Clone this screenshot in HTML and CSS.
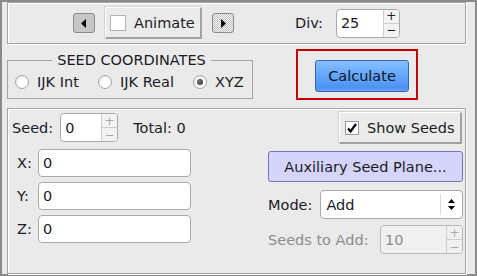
FILE: index.html
```html
<!doctype html>
<html>
  <head>
    <meta charset="utf-8">
    <title>Seed Controls</title>
    <link rel="stylesheet" href="styles.css">
  </head>
  <body>
    <div class="window">
      <div class="panel toolbar">
        <span class="arrowbtn">
          <svg width="6" height="9" viewBox="0 0 6 9"><polygon points="5,0 5,9 0,4.5" fill="#000"/></svg>
        </span>
        <span class="raised animate"><span class="checkbox"></span>Animate</span>
        <span class="arrowbtn hot">
          <svg width="6" height="9" viewBox="0 0 6 9"><polygon points="1,0 1,9 6,4.5" fill="#000"/></svg>
        </span>
        <span class="divlabel">Div:</span>
        <span class="spin divspin">
          <span class="val">25</span>
          <span class="steps"><span>+</span><span>&minus;</span></span>
        </span>
      </div>

      <div class="middle">
        <fieldset class="coords">
          <legend>SEED COORDINATES</legend>
          <div class="radios">
            <span class="opt opt1"><span class="radio"></span>IJK Int</span>
            <span class="opt opt2"><span class="radio"></span>IJK Real</span>
            <span class="opt"><span class="radio on"></span>XYZ</span>
          </div>
        </fieldset>
        <div class="calcbox">
          <span class="calc">Calculate</span>
        </div>
      </div>

      <div class="panel seeds">
        <div class="leftcol">
          <div class="seedrow">
            <span>Seed:</span>
            <span class="spin seedspin">
              <span class="val">0</span>
              <span class="steps faint"><span>+</span><span>&minus;</span></span>
            </span>
            <span class="total">Total: 0</span>
          </div>
          <div class="xyz first"><span class="axis">X:</span><span class="field">0</span></div>
          <div class="xyz"><span class="axis">Y:</span><span class="field">0</span></div>
          <div class="xyz"><span class="axis">Z:</span><span class="field">0</span></div>
        </div>
        <div class="rightcol">
          <span class="raised showseeds">
            <span class="checkbox small">
              <svg width="12" height="12" viewBox="0 0 12 12"><path d="M2 6.5 L4.5 9.5 L10 2" stroke="#000" stroke-width="2.2" fill="none"/></svg>
            </span>Show Seeds
          </span>
          <span class="aux">Auxiliary Seed Plane...</span>
          <div class="moderow">
            <span>Mode:</span>
            <span class="select">
              <span class="val">Add</span>
              <span class="updown">
                <svg width="7" height="11" viewBox="0 0 7 11"><polygon points="3.5,0 7,4 0,4" fill="#000"/><polygon points="0,7 7,7 3.5,11" fill="#000"/></svg>
              </span>
            </span>
          </div>
          <div class="addrow">
            <span class="dim">Seeds to Add:</span>
            <span class="spin addspin">
              <span class="val">10</span>
              <span class="steps faint"><span>+</span><span>&minus;</span></span>
            </span>
          </div>
        </div>
      </div>
    </div>
  </body>
</html>
```

FILE: styles.css
```css
body {
  margin: 0;
  font-family: 'DejaVu Sans', Verdana, sans-serif;
  font-size: 14.5px;
  color: #1b1b26;
}
.window {
  width: 477px;
  height: 276px;
  box-sizing: border-box;
  border: 2px solid #8a8a8a;
  background: #eaeaea;
  padding: 0 9px 0 5px;
  display: flex;
  flex-direction: column;
}
.panel {
  box-sizing: border-box;
  border: 1px solid #a4a4a4;
  box-shadow: inset 1px 1px 0 #fff, 1px 1px 0 #fff;
}

/* top toolbar */
.toolbar {
  height: 42px;
  display: flex;
  align-items: center;
  padding-left: 65px;
}
.arrowbtn {
  width: 22px;
  height: 20px;
  box-sizing: border-box;
  border: 1px solid #8c8c8c;
  border-radius: 3px;
  background: #c6c6c6;
  display: flex;
  align-items: center;
  justify-content: center;
}
.arrowbtn.hot {
  background: repeating-conic-gradient(#c4c4c4 0 25%, #f4f4f4 0 50%) 0 0 / 2px 2px;
}
.raised {
  box-sizing: border-box;
  display: flex;
  align-items: center;
  background: #ebebeb;
  border-style: solid;
  border-width: 1px 2px 2px 1px;
  border-color: #fff #a2a2a2 #a2a2a2 #fff;
  box-shadow: -1px -1px 0 #d2d2d2;
}
.animate {
  width: 97px;
  height: 32px;
  margin-left: 10px;
  margin-right: 10px;
  padding-left: 4px;
}
.checkbox {
  width: 16px;
  height: 16px;
  box-sizing: border-box;
  border: 1px solid #b2b2b2;
  background: #fff;
  margin-right: 8px;
  display: flex;
  align-items: center;
  justify-content: center;
}
.checkbox.small {
  width: 14px;
  height: 14px;
  border-color: #9a9a9a;
}
.divlabel {
  margin-left: 61px;
  margin-right: 13px;
}
.spin {
  box-sizing: border-box;
  height: 29px;
  display: flex;
  background: #fff;
  border: 1px solid #a9a9a9;
  border-radius: 4px;
  overflow: hidden;
}
.spin .val {
  flex: 1;
  padding-left: 4px;
  display: flex;
  align-items: center;
}
.steps {
  width: 15px;
  display: flex;
  flex-direction: column;
  border-left: 1px solid #cdcdcd;
  background: #f3f3f3;
}
.steps span {
  flex: 1;
  display: flex;
  align-items: center;
  justify-content: center;
  font-size: 12px;
  line-height: 1;
}
.steps span + span {
  border-top: 1px solid #cdcdcd;
}
.steps.faint span {
  color: #a8a8a8;
}
.divspin {
  width: 64px;
}

/* middle row */
.middle {
  height: 64px;
  display: flex;
  align-items: flex-start;
}
.coords {
  margin: 7px 0 0 0;
  width: 246px;
  box-sizing: border-box;
  border: 1px solid #a4a4a4;
  padding: 4px 4px 8px 7px;
  min-width: 0;
}
.coords legend {
  margin: 0 auto;
  padding: 0 5px;
  line-height: 18px;
}
.radios {
  display: flex;
  align-items: center;
  height: 17px;
}
.opt {
  display: flex;
  align-items: center;
}
.opt1 {
  width: 83px;
}
.opt2 {
  width: 95px;
}
.radio {
  width: 14px;
  height: 14px;
  box-sizing: border-box;
  border: 1px solid #a6a6a6;
  border-radius: 50%;
  background: radial-gradient(circle at 60% 60%, #fff 40%, #dcdcdc 100%);
  margin-right: 8px;
  display: flex;
  align-items: center;
  justify-content: center;
}
.radio.on::after {
  content: "";
  width: 6px;
  height: 6px;
  border-radius: 50%;
  background: radial-gradient(circle at 40% 40%, #7a7a7a, #202020);
}
.calcbox {
  margin: 5px 0 0 43px;
  width: 122px;
  height: 51px;
  box-sizing: border-box;
  border: 2px solid #c40000;
  padding: 9px 0 0 17px;
}
.calc {
  width: 94px;
  height: 32px;
  box-sizing: border-box;
  display: flex;
  align-items: center;
  justify-content: center;
  border: 1px solid #3566b8;
  border-radius: 3px;
  background: linear-gradient(#86c0ff, #66a8fb 45%, #4d92f2 90%, #6aa6f5);
  color: #0e1424;
}

/* bottom panel */
.seeds {
  height: 166px;
  display: flex;
  justify-content: space-between;
  padding: 4px 2px 0 4px;
}
.seedrow {
  height: 29px;
  display: flex;
  align-items: center;
}
.seedspin {
  width: 58px;
  margin-left: 7px;
}
.total {
  margin-left: 15px;
}
.xyz {
  display: flex;
  align-items: center;
  padding-left: 5px;
  margin-top: 5px;
}
.xyz.first {
  margin-top: 7px;
}
.axis {
  width: 21px;
}
.field {
  width: 153px;
  height: 28px;
  box-sizing: border-box;
  background: #fff;
  border: 1px solid #a9a9a9;
  border-radius: 4px;
  padding-left: 4px;
  display: flex;
  align-items: center;
}
.rightcol {
  width: 195px;
  display: flex;
  flex-direction: column;
}
.showseeds {
  align-self: flex-end;
  width: 123px;
  height: 32px;
  margin-top: -1px;
  margin-right: 1px;
  padding-left: 5px;
}
.aux {
  margin-top: 7px;
  height: 31px;
  box-sizing: border-box;
  border: 1px solid #7474b8;
  border-radius: 3px;
  background: #d5d5fb;
  display: flex;
  align-items: center;
  justify-content: center;
}
.moderow {
  margin-top: 8px;
  height: 29px;
  display: flex;
  align-items: center;
}
.select {
  flex: 1;
  margin-left: 8px;
  height: 29px;
  box-sizing: border-box;
  background: #fff;
  border: 1px solid #a9a9a9;
  border-radius: 4px;
  display: flex;
}
.select .val {
  flex: 1;
  padding-left: 5px;
  display: flex;
  align-items: center;
}
.updown {
  width: 21px;
  border-left: 1px solid #dadada;
  margin: 3px 0;
  display: flex;
  align-items: center;
  justify-content: center;
}
.addrow {
  margin-top: 6px;
  height: 29px;
  display: flex;
  align-items: center;
  justify-content: space-between;
}
.dim {
  color: #8d8d8d;
}
.addspin {
  width: 83px;
  background: #f0f0f0;
  border-color: #b8b8b8;
  color: #8d8d8d;
}
.addspin .steps {
  background: #f0f0f0;
}
```
